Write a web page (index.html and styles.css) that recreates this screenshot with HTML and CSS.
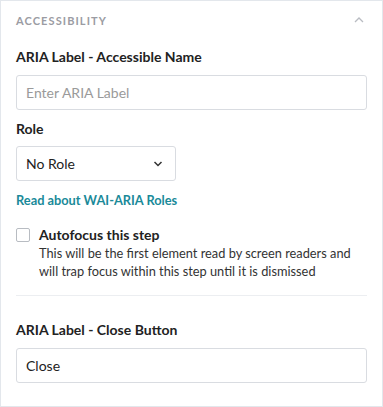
FILE: index.html
```html
<!DOCTYPE html>
<html>
<head>
<meta charset="utf-8">
<link rel="stylesheet" href="styles.css">
</head>
<body>
<div class="panel">
  <div class="header">
    <span class="title">Accessibility</span>
    <svg class="collapse" width="10" height="6" viewBox="0 0 10 6"><path d="M1 5 L5 1 L9 5" fill="none" stroke="#b9bcc2" stroke-width="1.3"/></svg>
  </div>
  <div class="label first">ARIA Label - Accessible Name</div>
  <div class="input placeholder">Enter ARIA Label</div>
  <div class="label role">Role</div>
  <div class="select">
    <span>No Role</span>
    <svg width="10" height="6" viewBox="0 0 10 6"><path d="M1.5 1 L5 4.5 L8.5 1" fill="none" stroke="#333" stroke-width="1.5"/></svg>
  </div>
  <div class="link">Read about WAI-ARIA Roles</div>
  <div class="check-row">
    <div class="checkbox"></div>
    <div class="check-text">
      <div class="check-title">Autofocus this step</div>
      <div class="check-desc">This will be the first element read by screen readers and will trap focus within this step until it is dismissed</div>
    </div>
  </div>
  <div class="divider"></div>
  <div class="label close-label">ARIA Label - Close Button</div>
  <div class="input">Close</div>
</div>
</body>
</html>
```
FILE: styles.css
```css
html, body {
  margin: 0;
  padding: 0;
  background: #ffffff;
}
body {
  font-family: "Lato", "Open Sans", sans-serif;
  color: #222;
}
.panel {
  box-sizing: border-box;
  width: 383px;
  height: 407px;
  border: 1px solid #e3e7ec;
  padding: 0 15px;
  background: #fff;
}
.header {
  height: 38px;
  display: flex;
  align-items: center;
  justify-content: space-between;
  padding-right: 3px;
}
.title {
  text-transform: uppercase;
  font-size: 11px;
  font-weight: 700;
  letter-spacing: 1.1px;
  color: #9b9ca3;
}
.label {
  font-size: 14px;
  font-weight: 700;
  line-height: 18px;
  color: #222;
}
.label.first { margin-top: 9px; }
.label.role { margin-top: 10px; }
.label.close-label { margin-top: 25px; }
.input {
  box-sizing: border-box;
  margin-top: 9px;
  height: 35px;
  border: 1px solid #d9dce1;
  border-radius: 3px;
  padding: 0 9px;
  display: flex;
  align-items: center;
  font-size: 14px;
  color: #222;
}
.input.placeholder { color: #9a9a9a; }
.select {
  box-sizing: border-box;
  margin-top: 8px;
  width: 160px;
  height: 35px;
  border: 1px solid #d9dce1;
  border-radius: 3px;
  padding: 0 12px 0 9px;
  display: flex;
  align-items: center;
  justify-content: space-between;
  font-size: 14px;
  color: #222;
}
.link {
  margin-top: 10px;
  font-size: 12.8px;
  font-weight: 700;
  line-height: 18px;
  color: #1a8a99;
}
.check-row {
  margin-top: 17px;
  display: flex;
  gap: 9px;
}
.checkbox {
  box-sizing: border-box;
  width: 14px;
  height: 14px;
  margin-top: 2px;
  border: 1px solid #b8bcc2;
  border-radius: 2px;
  flex: none;
}
.check-title {
  font-size: 14px;
  font-weight: 700;
  line-height: 18px;
  color: #222;
}
.check-desc {
  font-size: 12.8px;
  line-height: 18px;
  color: #333;
}
.divider {
  margin-top: 15px;
  height: 1px;
  background: #eceef1;
}
```
